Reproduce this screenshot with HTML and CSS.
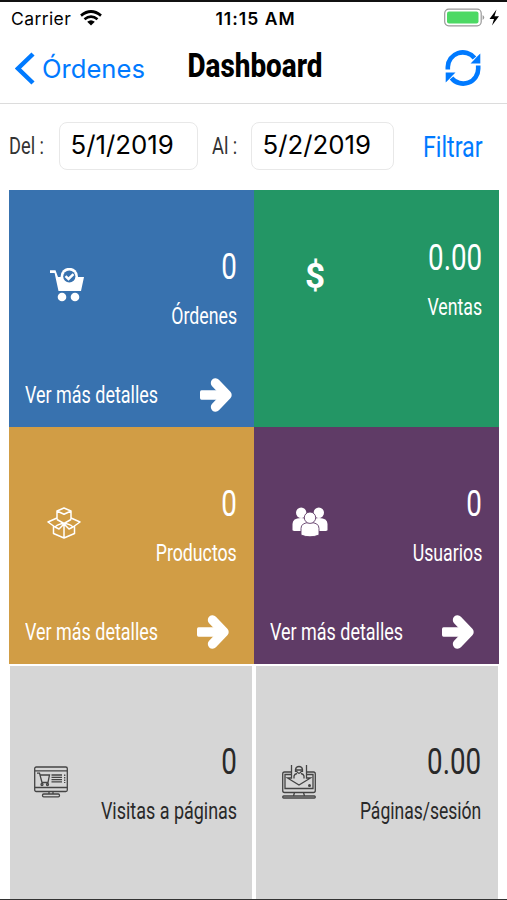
FILE: index.html
```html
<!DOCTYPE html>
<html lang="es">
<head>
<meta charset="utf-8">
<title>Dashboard</title>
<link rel="stylesheet" href="styles.css">
</head>
<body>
<svg class="defs" aria-hidden="true">
  <symbol id="arrow" viewBox="0 0 32 34"><path d="M15.500 5L27 17L15.500 29" fill="none" stroke="#fff" stroke-width="9.400" stroke-linecap="round" stroke-linejoin="round"/><path d="M1.500 12.300H24V21.700H1.500Q0 21.700 0 20V14Q0 12.300 1.500 12.300Z" fill="#fff"/></symbol>
</svg>
<header class="status">
  <div class="carrier"><span>Carrier</span>
    <svg class="wifi" viewBox="0 0 22 16"><g fill="none" stroke="#000" stroke-width="2.700"><path d="M1 5.600Q11-2.600 21 5.600"/><path d="M4.500 9.300Q11 3.900 17.500 9.300"/></g><path d="M7.200 11.800Q11 8.600 14.800 11.800L11 15.600Z"/></svg>
  </div>
  <div class="clock">11:15 AM</div>
  <div class="power">
    <svg viewBox="0 0 57 20"><rect x="1.700" y="1.200" width="36.500" height="16.600" rx="4" fill="#fff" stroke="#999" stroke-width="1.200"/><rect x="4" y="3.400" width="31.500" height="12.200" rx="2" fill="#4cd964"/><path d="M39.600 7Q43 9.500 39.600 12Z" fill="#999"/><path d="M53.500 1.500L46.500 11H51L49 17.500L56 8.300H51.500Z"/></svg>
  </div>
</header>
<nav class="nav">
  <a class="back"><svg viewBox="0 0 20 33"><path d="M18 2L3 16.500L18 31" fill="none" stroke="#007aff" stroke-width="4.500"/></svg><span>Órdenes</span></a>
  <h1 class="title">Dashboard</h1>
  <svg class="refresh" viewBox="0 0 36 36"><g fill="none" stroke="#007aff" stroke-width="4.600"><path d="M2.800 19.500V17A15 15 0 0 1 29.500 8"/><path d="M33.200 15.500V18A15 15 0 0 1 6.500 28"/></g><path d="M35.300 3.500V13.500H25.500L28.500 10.500L31.500 7.200ZM.7 32.500V22.500H10.500L7.500 25.500L4.500 28.800Z" fill="#007aff"/></svg>
</nav>
<section class="filter">
  <span class="lbl from">Del :</span>
  <div class="date first">5/1/2019</div>
  <span class="lbl to">Al :</span>
  <div class="date second">5/2/2019</div>
  <span class="apply">Filtrar</span>
</section>
<main class="grid">
  <article class="tile blue">
    <div class="body">
      <svg class="icon cart" viewBox="0 0 34 34"><path d="M0 2.300H5.500L8 9H34L31 22.900H8.500L4.600 5H0Z" fill="#fff"/><circle cx="19.300" cy="8.500" r="8.700" fill="#fff"/><circle cx="19.300" cy="8.500" r="6.100" fill="#3872af"/><path d="M15.500 8.200L18.500 11L23.500 6.200" fill="none" stroke="#fff" stroke-width="2.500"/><circle cx="12" cy="29" r="4.300" fill="#fff"/><circle cx="25" cy="29" r="4.300" fill="#fff"/></svg>
      <div class="stats"><span class="num">0</span><span class="name n-ord">Órdenes</span></div>
    </div>
    <a class="more"><span>Ver más detalles</span><svg><use href="#arrow"/></svg></a>
  </article>
  <article class="tile green">
    <div class="body">
      <span class="icon dollar">$</span>
      <div class="stats"><span class="num">0.00</span><span class="name n-ven">Ventas</span></div>
    </div>
  </article>
  <article class="tile gold">
    <div class="body">
      <svg class="icon box" viewBox="0 0 34 32"><g fill="none" stroke="#fff" stroke-width="1.500" stroke-linejoin="round"><path d="M10 12.500V4L17 1L24 4V12.500M10 4L17 7.300L24 4"/><path d="M10 11L1 15L8 20Q12 16.500 17 16.500Q22 16.500 26 20L33 15L24 11M10 12.500L17 16.500L24 12.500M6.500 19V26.500L17 31L27.500 26.500V19M17 16.500V31M17 17L22 22L26 20M17 17L12 22L8 20"/></g></svg>
      <div class="stats"><span class="num">0</span><span class="name n-pro">Productos</span></div>
    </div>
    <a class="more"><span>Ver más detalles</span><svg><use href="#arrow"/></svg></a>
  </article>
  <article class="tile purple">
    <div class="body">
      <svg class="icon users" viewBox="0 0 36 30"><g fill="#fff"><circle cx="9.200" cy="5.700" r="5.200"/><circle cx="26.800" cy="5.700" r="5.200"/><path d="M.5 23V17Q.5 11 9 11Q14 11 16 14V24H4Q.5 24 .5 23ZM35.500 23V17Q35.500 11 27 11Q22 11 20 14V24H32Q35.500 24 35.500 23Z"/></g><g fill="#fff" stroke="#5f3b66" stroke-width=".9"><path d="M9 28V21.500Q9 15.500 18 15.500Q27 15.500 27 21.500V28Q23 29.800 18 29.800Q13 29.800 9 28Z"/><circle cx="18" cy="10.700" r="5.700"/></g></svg>
      <div class="stats"><span class="num">0</span><span class="name n-usu">Usuarios</span></div>
    </div>
    <a class="more"><span>Ver más detalles</span><svg><use href="#arrow"/></svg></a>
  </article>
  <article class="tile grey left">
    <div class="body">
      <svg class="icon shop" viewBox="0 0 34 32"><g fill="none" stroke="#444" stroke-width="1.300"><rect x=".7" y="1" width="32.600" height="24.500" rx="1.500"/><path d="M1 4.800H33M1 21.500H33M15 25.500V28M19 25.500V28"/><rect x="8.500" y="28" width="17" height="2.800" rx="1.200"/><path d="M3 7.200H5.500L8 16.500H14L15.500 9H6"/><circle cx="8" cy="18.500" r="1"/><circle cx="13.500" cy="18.500" r="1"/><path d="M17.500 9H28M17.500 11.300H28M17.500 13.600H28M17.500 15.900H28"/><path d="M30.700 8.500V17" stroke-dasharray="1.500 1"/></g></svg>
      <div class="stats"><span class="num">0</span><span class="name n-vis">Visitas a páginas</span></div>
    </div>
  </article>
  <article class="tile grey right">
    <div class="body">
      <svg class="icon session" viewBox="0 0 34 34"><g fill="none" stroke="#444" stroke-width="1.300"><path d="M9 7H2.500Q.7 7 .7 9V25.500Q.7 27.500 2.500 27.500H31.500Q33.300 27.500 33.300 25.500V9Q33.300 7 31.500 7H25"/><path d="M9 9.500H3V23.500H31V9.500H25M12.500 27.500L11.500 31M21.500 27.500L22.500 31"/><rect x=".7" y="31" width="32.600" height="2" rx="1"/><path d="M9.500 0V13H5.500L17 20L28.500 13H24.500V0M12 13.500V11Q12.500 9 15 8.500M22 13.500V11Q21.500 9 19 8.500M13.500 7V4.500Q14 1.500 17 1.500Q20 1.500 20.500 4.500V7M13.500 5H20.500M14.500 6Q17 10.500 19.500 6"/></g><circle cx="27.500" cy="20.500" r="1.500" fill="#444"/></svg>
      <div class="stats"><span class="num">0.00</span><span class="name n-pag">Páginas/sesión</span></div>
    </div>
  </article>
</main>
</body>
</html>
```
FILE: styles.css
```css
* { box-sizing: border-box; }
body {
  margin: 0;
  width: 507px;
  height: 900px;
  overflow: hidden;
  display: flex;
  flex-direction: column;
  background: #fff;
  border-top: 2px solid #111;
  border-bottom: 1px solid #333;
  font-family: Roboto, sans-serif;
  color: #000;
}
svg { display: block; flex: none; }
.defs { display: none; }

.status {
  flex: none;
  height: 32px;
  display: grid;
  grid-template-columns: 1fr auto 1fr;
  align-items: center;
  padding: 0 7px 0 11px;
  font: 17.5px Inter, sans-serif;
}
.carrier { display: flex; align-items: center; gap: 9px; letter-spacing: .4px; }
.wifi { width: 22px; height: 16px; }
.clock { font-size: 17.5px; font-weight: 600; letter-spacing: 1px; }
.power { display: flex; justify-content: flex-end; }
.power svg { width: 57px; height: 20px; }

.nav {
  flex: none;
  height: 70px;
  display: grid;
  grid-template-columns: 1fr auto 1fr;
  align-items: center;
  padding: 0 13px 0 15px;
  border-bottom: 1px solid #dcdcdc;
}
.back { display: flex; align-items: center; gap: 7px; color: #007aff; font: 25.6px Inter, sans-serif; }
.back svg { width: 20px; height: 33px; }
.title {
  width: 136px;
  margin: -8px 0 0;
  display: flex;
  justify-content: center;
  font-size: 34px;
  font-weight: 800;
  line-height: 60px;
  transform: scaleX(.82);
}
.refresh { width: 36px; height: 36px; justify-self: end; margin: -2px 13px 0 0; }

.filter { flex: none; height: 86px; display: flex; align-items: flex-start; padding: 18px 9px 0; }
.lbl, .apply { white-space: nowrap; transform-origin: left; line-height: 48px; }
.lbl { font-size: 24px; color: #333; }
.from { width: 50px; transform: scaleX(.76); }
.to { width: 39px; margin-left: 14px; transform: scaleX(.76); }
.date {
  height: 48px;
  border: 1px solid #e8e8e8;
  border-radius: 8px;
  padding-left: 10.5px;
  font: 25.8px/44px Inter, sans-serif;
}
.first { width: 139px; }
.second { width: 143px; }
.apply { margin-left: 29px; font-size: 29px; line-height: 51px; color: #007aff; transform: scaleX(.8); }

.grid {
  flex: none;
  width: 490px;
  margin-left: 9px;
  display: grid;
  grid-template-columns: 245px 245px;
  grid-template-rows: 237px 237px 237px;
}
.tile { display: flex; flex-direction: column; color: #fff; }
.blue { background: #3872af; }
.green { background: #239665; }
.gold { background: #d19d45; }
.purple { background: #5f3b66; }
.grey { background: #d6d6d6; color: #292929; }
.left { margin: 2px 2px 0 1px; }
.right { margin: 2px 1px 0 2px; }

.body { height: 183px; flex: none; display: flex; padding: 55px 17px 0 0; }
.green .body { padding-top: 46px; }
.grey .body { padding-top: 74px; padding-right: 15px; }
.right .body { padding-right: 17px; }
.stats { flex: 1; min-width: 0; display: flex; flex-direction: column; align-items: flex-end; gap: 5px; white-space: nowrap; line-height: 44px; }
.num { font-size: 37px; transform: scaleX(.75); transform-origin: right; }
.name { font-size: 24px; transform: scaleX(.738); transform-origin: right; }
.n-vis { transform: scaleX(.748); }
.n-pag { transform: scaleX(.73); }
.icon { flex: none; }
.cart { width: 34px; height: 34px; margin: 23px 0 0 41px; }
.dollar { margin: 19px 0 0 51px; font: 700 35px/44px Roboto, sans-serif; }
.box { width: 34px; height: 32px; margin: 25px 0 0 38px; }
.users { width: 36px; height: 30px; margin: 25px 0 0 38px; }
.shop { width: 34px; height: 32px; margin: 26px 0 0 24px; }
.session { width: 34px; height: 34px; margin: 25px 0 0 26px; }

.more { height: 44px; display: flex; justify-content: space-between; align-items: center; padding: 0 25px 0 16px; }
.blue .more { padding-right: 22px; }
.more span { width: 133px; white-space: nowrap; font-size: 24px; line-height: 44px; transform: scaleX(.748); transform-origin: left; }
.more svg { width: 32px; height: 34px; }
```
